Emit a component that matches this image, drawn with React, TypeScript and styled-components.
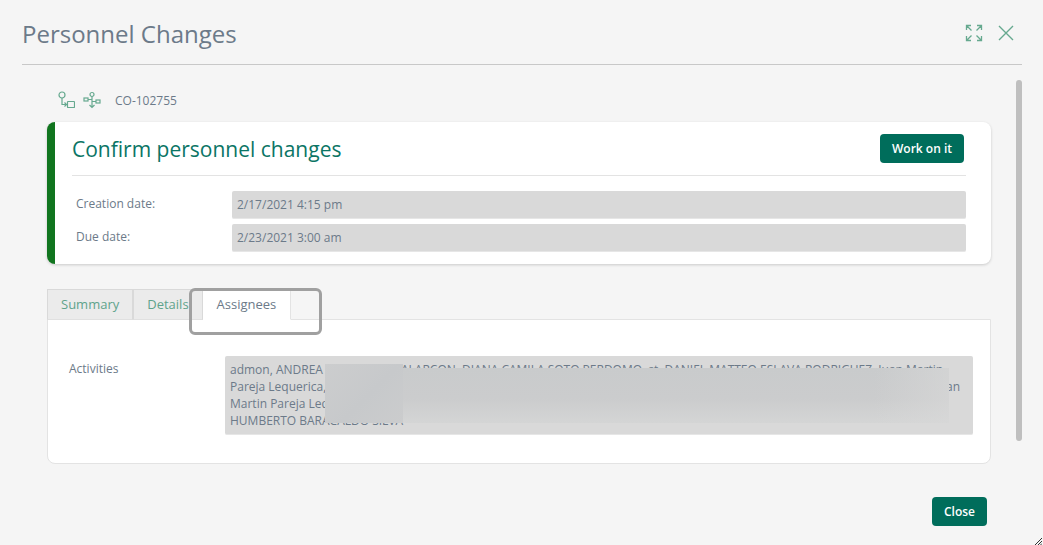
import React from "react";
import styled, { createGlobalStyle } from "styled-components";

const GlobalStyle = createGlobalStyle`
  * { box-sizing: border-box; }
  body {
    margin: 0;
    background: #f5f5f5;
    color: #6c7a89;
    font-family: "Open Sans", "Noto Sans", sans-serif;
    font-size: 12px;
    line-height: 17px;
  }
`;

const Dialog = styled.main`
  position: relative;
  display: flex;
  flex-direction: column;
  min-height: 100vh;
`;

const Header = styled.header`
  display: flex;
  align-items: center;
  justify-content: space-between;
  height: 65px;
  margin: 0 21px 0 22px;
  padding: 4px 8px 0 0;
  border-bottom: 1px solid #c8c8c8;
`;

const Title = styled.h1`
  margin: 0;
  font-size: 24px;
  line-height: 32px;
  font-weight: 400;
`;

const HeaderActions = styled.div`
  display: flex;
  gap: 15px;
  padding-bottom: 2px;
`;

const IconButton = styled.button`
  display: flex;
  padding: 0;
  border: 0;
  background: none;
  color: #66a98f;
  cursor: pointer;
`;

const Body = styled.div`
  display: flex;
  align-items: flex-start;
  gap: 25px;
  margin: 15px 21px 0 47px;
`;

const Content = styled.div`
  flex: 1;
  min-width: 0;
`;

const ScrollThumb = styled.div`
  flex: none;
  width: 6px;
  height: 361px;
  border-radius: 3px;
  background: #bfbfbf;
`;

const CaseRow = styled.div`
  display: flex;
  align-items: center;
  gap: 8px;
  height: 42px;
  padding: 0 0 2px 10px;
`;

const CaseNumber = styled.span`
  margin-left: 6px;
`;

const TaskCard = styled.section`
  padding: 0 25px 12px 17px;
  border-left: 8px solid #11751f;
  border-radius: 8px;
  background: #fff;
  box-shadow: 0 1px 3px rgba(0, 0, 0, 0.18);
`;

const TaskHeader = styled.div`
  display: flex;
  align-items: center;
  justify-content: space-between;
  height: 54px;
  margin-bottom: 15px;
  padding-right: 2px;
  border-bottom: 1px solid #e3e3e3;
`;

const TaskTitle = styled.h2`
  margin: 0;
  color: #0b7565;
  font-size: 21px;
  line-height: 28px;
  font-weight: 400;
`;

const PrimaryButton = styled.button`
  height: 29px;
  padding: 0 12px;
  border: 0;
  border-radius: 4px;
  background: #006d5b;
  color: #fff;
  font: 600 12px/17px "Open Sans", "Noto Sans", sans-serif;
  cursor: pointer;
`;

const FieldRow = styled.div`
  display: grid;
  grid-template-columns: 156px 1fr;
  align-items: start;

  & + & {
    margin-top: 5px;
  }
`;

const DateFields = styled.div`
  padding-left: 4px;
`;

const Label = styled.label`
  padding-top: 4px;
`;

const ReadOnlyInput = styled.input`
  width: 100%;
  min-width: 0;
  height: 28px;
  padding: 0 5px;
  border: 0;
  border-bottom: 1px solid #e6e6e6;
  border-radius: 2px;
  background: #d9d9d9;
  color: inherit;
  font: inherit;
  outline: none;
`;

const TabList = styled.div`
  position: relative;
  display: flex;
  margin-top: 25px;
`;

const Tab = styled.button<{ $active?: boolean }>`
  height: 31px;
  margin-bottom: -1px;
  padding: 0 ${(p) => (p.$active ? "14px" : "13px")} 2px;
  border: 1px solid ${(p) => (p.$active ? "#e3e3e3" : "#d9d9d9")};
  border-bottom-color: ${(p) => (p.$active ? "#fff" : "#e0e0e0")};
  border-left-width: ${(p) => (p.$active ? "0" : "1px")};
  background: ${(p) => (p.$active ? "#fff" : "#ebebeb")};
  color: ${(p) => (p.$active ? "#6c7a89" : "#5fa38b")};
  font: 400 13px/18px "Open Sans", "Noto Sans", sans-serif;
  cursor: pointer;
  z-index: ${(p) => (p.$active ? 1 : 0)};
`;

const TabHighlight = styled.div`
  position: absolute;
  z-index: 2;
  top: -1px;
  left: 142px;
  width: 133px;
  height: 47px;
  border: 3px solid #a0a0a0;
  border-radius: 6px;
  pointer-events: none;
`;

const Panel = styled.section`
  padding: 36px 17px 28px 21px;
  border: 1px solid #e3e3e3;
  border-radius: 0 0 8px 8px;
  background: #fff;
`;

const Assignees = styled.div`
  position: relative;
  padding: 5px;
  border-bottom: 1px solid #e6e6e6;
  border-radius: 2px;
  background: #d9d9d9;
`;

const AssigneeLine = styled.div`
  display: flex;
  height: 17px;
  white-space: pre;
`;

const LineStart = styled.span`
  width: 171px;
`;

const LineEnd = styled.span`
  margin-left: auto;
  padding-right: 8px;
`;

const Redaction = styled.div<{ $small?: boolean }>`
  position: absolute;
  left: 100px;
  top: ${(p) => (p.$small ? "8px" : "12px")};
  right: ${(p) => (p.$small ? "auto" : "24px")};
  width: ${(p) => (p.$small ? "78px" : "auto")};
  height: ${(p) => (p.$small ? "59px" : "55px")};
  background: ${(p) =>
    p.$small
      ? "linear-gradient(135deg, #cccdce, #c7c9cb 55%, #cbcccd)"
      : "linear-gradient(90deg, transparent 88%, rgba(217,217,217,.6)), linear-gradient(#c9cbcc, #cbcccd 55%, #d4d5d5)"};
`;

const Footer = styled.footer`
  display: flex;
  justify-content: flex-end;
  padding: 33px 56px 19px 0;
`;

const ResizeGrip = styled.svg`
  position: absolute;
  right: 1px;
  bottom: 0;
`;

const ExpandIcon = () => (
  <svg width="18" height="18" viewBox="0 0 18 18" fill="none" stroke="currentColor" aria-hidden="true">
    <path d="M1.500 6V1.500H6M12 1.500h4.500V6M16.500 12v4.500H12M6 16.500H1.500V12M2 2l4.500 4.500M16 2l-4.500 4.500M16 16l-4.500-4.500M2 16l4.500-4.500" strokeWidth="1.3" />
  </svg>
);

const CloseIcon = () => (
  <svg width="16" height="18" viewBox="0 0 16 18" fill="none" stroke="currentColor" aria-hidden="true">
    <path d="M1 2l14 14M15 2L1 16" strokeWidth="1.4" />
  </svg>
);

const FlowIcon = () => (
  <svg width="18" height="18" viewBox="0 0 18 18" fill="none" stroke="currentColor" strokeWidth="1.2" aria-hidden="true">
    <circle cx="5" cy="4" r="3" />
    <path d="M5 7v6.500H9.500M7.500 11.500l2 2-2 2" />
    <rect x="10.500" y="10.500" width="7" height="6" rx=".6" />
  </svg>
);

const ProcessIcon = () => (
  <svg width="18" height="18" viewBox="0 0 18 18" fill="none" stroke="currentColor" strokeWidth="1.2" aria-hidden="true">
    <circle cx="9" cy="3.500" r="2" />
    <path d="M9 5.500V16M6.500 14L9 16.500 11.500 14M5 8.500h4M9 10.500h4" />
    <rect x="1" y="7" width="4" height="3" />
    <rect x="13" y="9" width="4" height="3" />
  </svg>
);

export default function App() {
  return (
    <>
      <GlobalStyle />
      <Dialog>
        <Header>
          <Title>Personnel Changes</Title>
          <HeaderActions>
            <IconButton aria-label="Expand"><ExpandIcon /></IconButton>
            <IconButton aria-label="Close window"><CloseIcon /></IconButton>
          </HeaderActions>
        </Header>
        <Body>
          <Content>
            <CaseRow>
              <IconButton aria-label="View workflow"><FlowIcon /></IconButton>
              <IconButton aria-label="View process"><ProcessIcon /></IconButton>
              <CaseNumber>CO-102755</CaseNumber>
            </CaseRow>
            <TaskCard>
              <TaskHeader>
                <TaskTitle>Confirm personnel changes</TaskTitle>
                <PrimaryButton>Work on it</PrimaryButton>
              </TaskHeader>
              <DateFields>
                <FieldRow>
                  <Label htmlFor="created">Creation date:</Label>
                  <ReadOnlyInput id="created" readOnly value="2/17/2021 4:15 pm" />
                </FieldRow>
                <FieldRow>
                  <Label htmlFor="due">Due date:</Label>
                  <ReadOnlyInput id="due" readOnly value="2/23/2021 3:00 am" />
                </FieldRow>
              </DateFields>
            </TaskCard>
            <TabList role="tablist">
              <Tab role="tab">Summary</Tab>
              <Tab role="tab">Details</Tab>
              <Tab role="tab" aria-selected $active>Assignees</Tab>
              <TabHighlight />
            </TabList>
            <Panel role="tabpanel">
              <FieldRow>
                <Label as="span" id="activities">Activities</Label>
                <Assignees aria-labelledby="activities">
                  <AssigneeLine>
                    <LineStart>admon, ANDREA</LineStart>
                    <span>ALARCON, DIANA CAMILA SOTO PERDOMO, st, DANIEL MATTEO ESLAVA RODRIGUEZ, Juan Martin</span>
                  </AssigneeLine>
                  <AssigneeLine>
                    <LineStart>Pareja Lequerica,</LineStart>
                    <LineEnd>an</LineEnd>
                  </AssigneeLine>
                  <AssigneeLine>Martin Pareja Lequerica</AssigneeLine>
                  <AssigneeLine>HUMBERTO BARACALDO SILVA</AssigneeLine>
                  <Redaction />
                  <Redaction $small />
                </Assignees>
              </FieldRow>
            </Panel>
          </Content>
          <ScrollThumb />
        </Body>
        <Footer>
          <PrimaryButton>Close</PrimaryButton>
        </Footer>
        <ResizeGrip width="7" height="7" viewBox="0 0 7 7" stroke="#333" aria-hidden="true">
          <path d="M0 7l7-7M3 7l4-4M5.500 7L7 5.500" />
        </ResizeGrip>
      </Dialog>
    </>
  );
}
